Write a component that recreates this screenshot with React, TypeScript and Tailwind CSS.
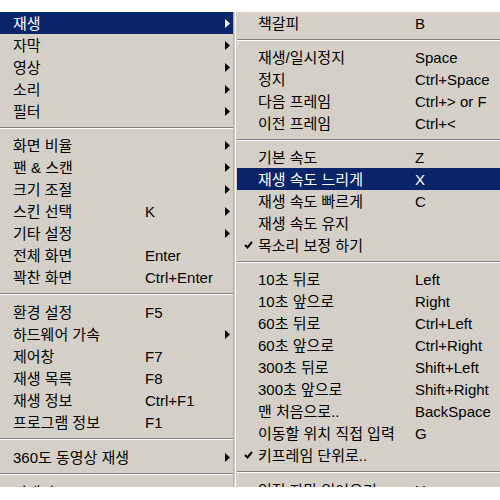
import React from "react";

type Item =
  | { sep: true; tall?: boolean }
  | { sep?: false; label: string; keys?: string; arrow?: boolean; active?: boolean; check?: boolean };

const leftMenu: Item[] = [
  { label: "재생", arrow: true, active: true },
  { label: "자막", arrow: true },
  { label: "영상", arrow: true },
  { label: "소리", arrow: true },
  { label: "필터", arrow: true },
  { sep: true },
  { label: "화면 비율", arrow: true },
  { label: "팬 & 스캔", arrow: true },
  { label: "크기 조절", arrow: true },
  { label: "스킨 선택", keys: "K", arrow: true },
  { label: "기타 설정", arrow: true },
  { label: "전체 화면", keys: "Enter" },
  { label: "꽉찬 화면", keys: "Ctrl+Enter" },
  { sep: true, tall: true },
  { label: "환경 설정", keys: "F5" },
  { label: "하드웨어 가속", arrow: true },
  { label: "제어창", keys: "F7" },
  { label: "재생 목록", keys: "F8" },
  { label: "재생 정보", keys: "Ctrl+F1" },
  { label: "프로그램 정보", keys: "F1" },
  { sep: true, tall: true },
  { label: "360도 동영상 재생", arrow: true },
  { sep: true, tall: true },
  { label: "꺼내기", keys: "Alt+F4" },
];

const rightMenu: Item[] = [
  { label: "책갈피", keys: "B" },
  { sep: true },
  { label: "재생/일시정지", keys: "Space" },
  { label: "정지", keys: "Ctrl+Space" },
  { label: "다음 프레임", keys: "Ctrl+> or F" },
  { label: "이전 프레임", keys: "Ctrl+<" },
  { sep: true },
  { label: "기본 속도", keys: "Z" },
  { label: "재생 속도 느리게", keys: "X", active: true },
  { label: "재생 속도 빠르게", keys: "C" },
  { label: "재생 속도 유지" },
  { label: "목소리 보정 하기", check: true },
  { sep: true },
  { label: "10초 뒤로", keys: "Left" },
  { label: "10초 앞으로", keys: "Right" },
  { label: "60초 뒤로", keys: "Ctrl+Left" },
  { label: "60초 앞으로", keys: "Ctrl+Right" },
  { label: "300초 뒤로", keys: "Shift+Left" },
  { label: "300초 앞으로", keys: "Shift+Right" },
  { label: "맨 처음으로..", keys: "BackSpace" },
  { label: "이동할 위치 직접 입력", keys: "G" },
  { label: "키프레임 단위로..", check: true },
  { sep: true, tall: true },
  { label: "인접 자막 읽어오기", keys: "U" },
];

const Arrow = ({ white }: { white?: boolean }) => (
  <svg width="5" height="9" viewBox="0 0 5 9" className="shrink-0">
    <path d="M0 0 L5 4.5 L0 9 Z" fill={white ? "#ffffff" : "#000000"} />
  </svg>
);

const Check = ({ white }: { white?: boolean }) => (
  <svg width="9" height="8" viewBox="0 0 9 8">
    <path
      d="M1 4 L3.5 6.5 L8 1"
      fill="none"
      stroke={white ? "#ffffff" : "#000000"}
      strokeWidth="2"
    />
  </svg>
);

const Separator = ({ tall }: { tall?: boolean }) => (
  <div className={tall ? "h-[13px] pt-[5px]" : "h-[12px] pt-[5px]"}>
    <div className="h-px bg-[#808080]" />
    <div className="h-px bg-white" />
  </div>
);

const LeftMenu = () => (
  <div className="w-[233px] shrink-0">
    {leftMenu.map((item, i) =>
      item.sep ? (
        <Separator key={i} tall={item.tall} />
      ) : (
        <div
          key={i}
          className={`flex h-[22px] items-center pl-[13px] pr-[3px] ${
            item.active ? "bg-[#0a246a] text-white" : "text-black"
          }`}
        >
          <span className="w-[132px] shrink-0 whitespace-nowrap">{item.label}</span>
          <span className="flex-1 whitespace-nowrap">{item.keys}</span>
          {item.arrow && <Arrow white={item.active} />}
        </div>
      )
    )}
  </div>
);

const RightMenu = () => (
  <div className="flex-1 overflow-hidden">
    {rightMenu.map((item, i) =>
      item.sep ? (
        <Separator key={i} tall={item.tall} />
      ) : (
        <div
          key={i}
          className={`flex h-[22px] items-center ${
            item.active ? "bg-[#0a246a] text-white" : "text-black"
          }`}
        >
          <span className="flex w-[21px] shrink-0 justify-center pl-[1px]">
            {item.check && <Check white={item.active} />}
          </span>
          <span className="w-[157px] shrink-0 whitespace-nowrap">{item.label}</span>
          <span className="whitespace-nowrap">{item.keys}</span>
        </div>
      )
    )}
  </div>
);

export default function App() {
  return (
    <div
      className="flex h-[500px] w-[500px] flex-col overflow-hidden bg-white text-[15px] leading-none"
      style={{ fontFamily: '"Liberation Sans", "Noto Sans CJK KR", sans-serif' }}
    >
      <div className="h-[12px] shrink-0 bg-white" />
      <div className="flex h-[475px] shrink-0 overflow-hidden bg-[#d4d0c8]">
        <LeftMenu />
        <div className="flex w-[4px] shrink-0">
          <div className="w-px bg-[#b4b0a8]" />
          <div className="w-px bg-[#d4d0c8]" />
          <div className="w-px bg-white" />
          <div className="w-px bg-[#d4d0c8]" />
        </div>
        <RightMenu />
      </div>
      <div className="flex-1 bg-white" />
    </div>
  );
}
